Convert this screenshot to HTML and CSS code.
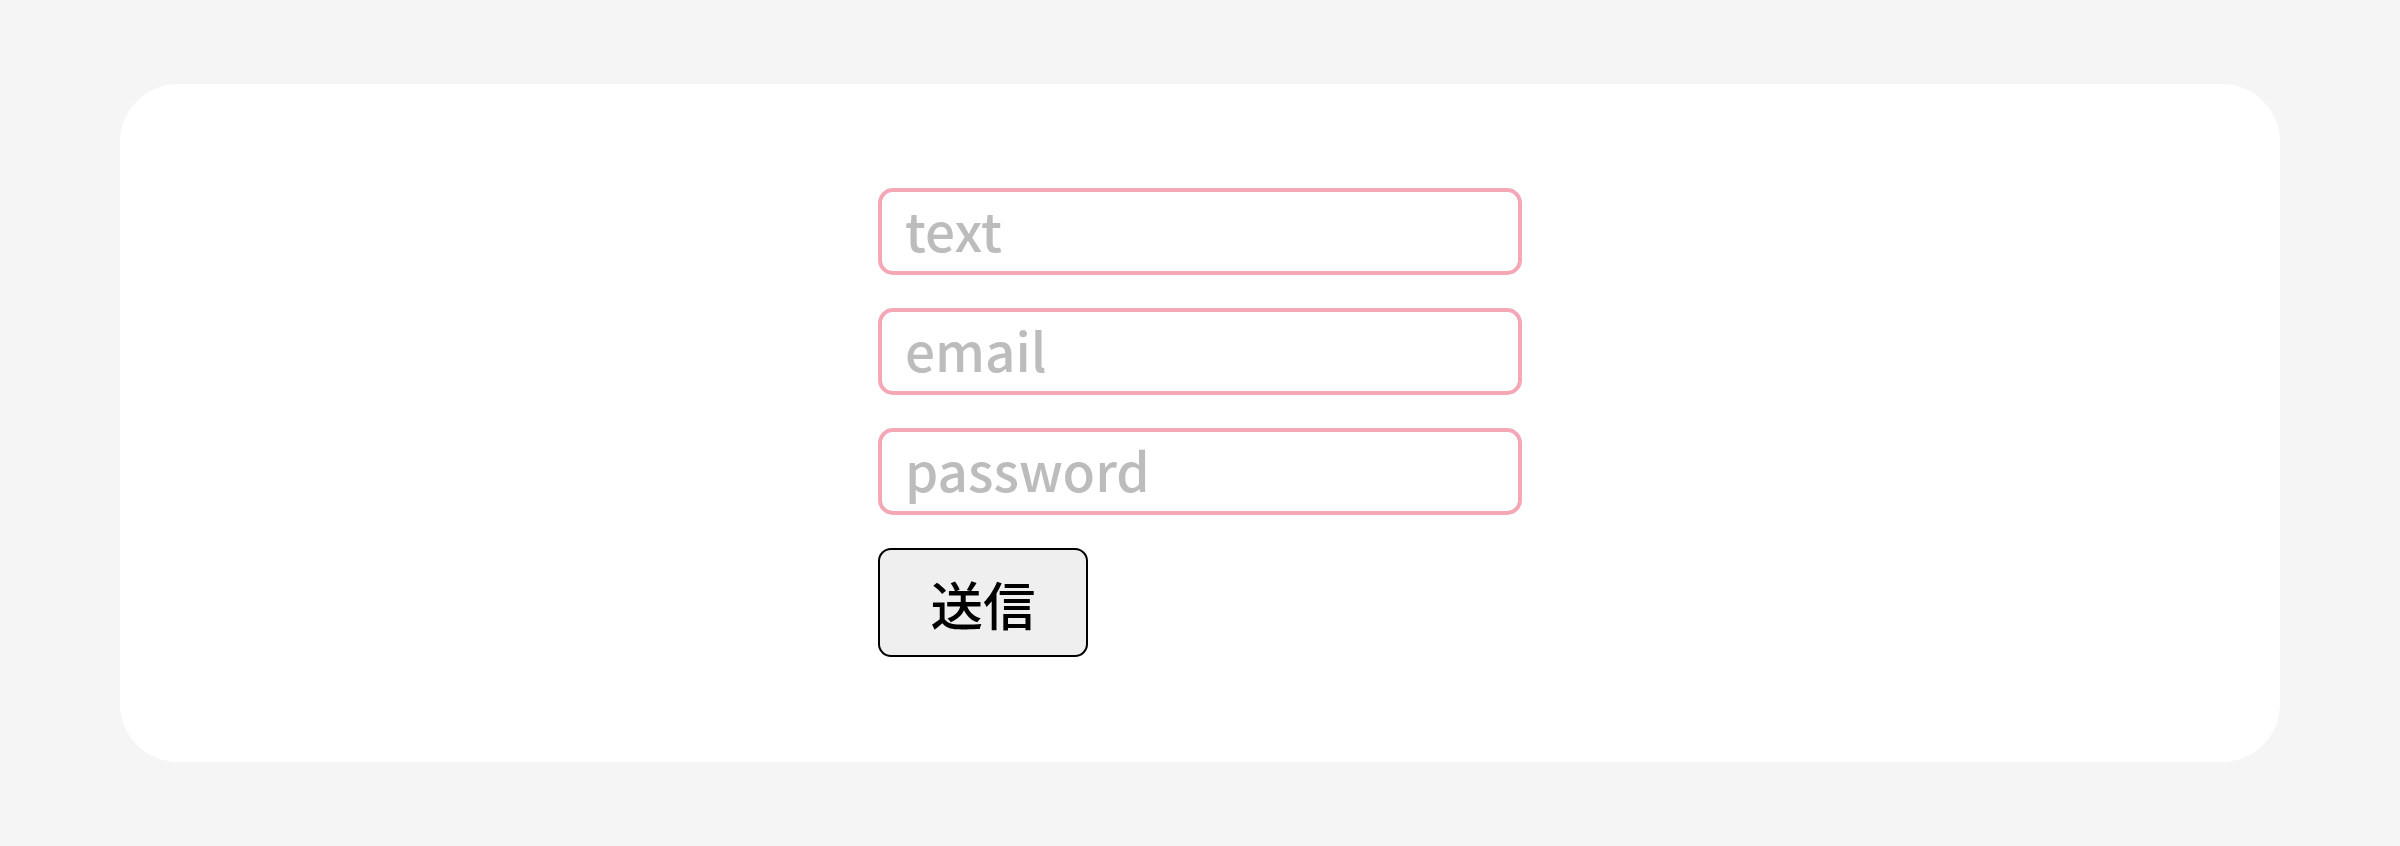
FILE: index.html
```html
<!DOCTYPE html>
<html lang="ja">
<head>
<meta charset="utf-8">
<title>Form</title>
<link rel="stylesheet" href="styles.css">
</head>
<body>
<main class="page">
  <section class="card">
    <form class="form">
      <input class="field" type="text" placeholder="text">
      <input class="field" type="email" placeholder="email">
      <input class="field" type="password" placeholder="password">
      <button class="submit" type="button">送信</button>
    </form>
  </section>
</main>
</body>
</html>
```
FILE: styles.css
```css
html, body {
  margin: 0;
  padding: 0;
  background: #f5f5f5;
}
body {
  font-family: "Noto Sans CJK JP", "Noto Sans", sans-serif;
}
.page {
  padding: 84px 120px;
}
.card {
  background: #ffffff;
  border-radius: 58px;
  height: 678px;
  box-sizing: border-box;
  padding: 104px 0;
  display: flex;
  justify-content: center;
}
.form {
  width: 644px;
  display: flex;
  flex-direction: column;
  align-items: flex-start;
  gap: 33px;
}
.field {
  width: 644px;
  height: 87px;
  box-sizing: border-box;
  border: 4px solid #f4a7b5;
  border-radius: 15px;
  padding: 0 23px 6px;
  font-family: "Noto Sans CJK JP", "Noto Sans", sans-serif;
  font-size: 53px;
  font-weight: 500;
  color: #333;
  background: #fff;
  outline: none;
}
.field::placeholder {
  color: #bcbcbc;
}
.submit {
  box-sizing: border-box;
  height: 109px;
  width: 210px;
  border: 2px solid #000;
  border-radius: 13px;
  background: #efefef;
  font-family: "Noto Sans CJK JP", sans-serif;
  font-size: 52.5px;
  font-weight: 500;
  color: #000;
  padding: 0;
}
```
